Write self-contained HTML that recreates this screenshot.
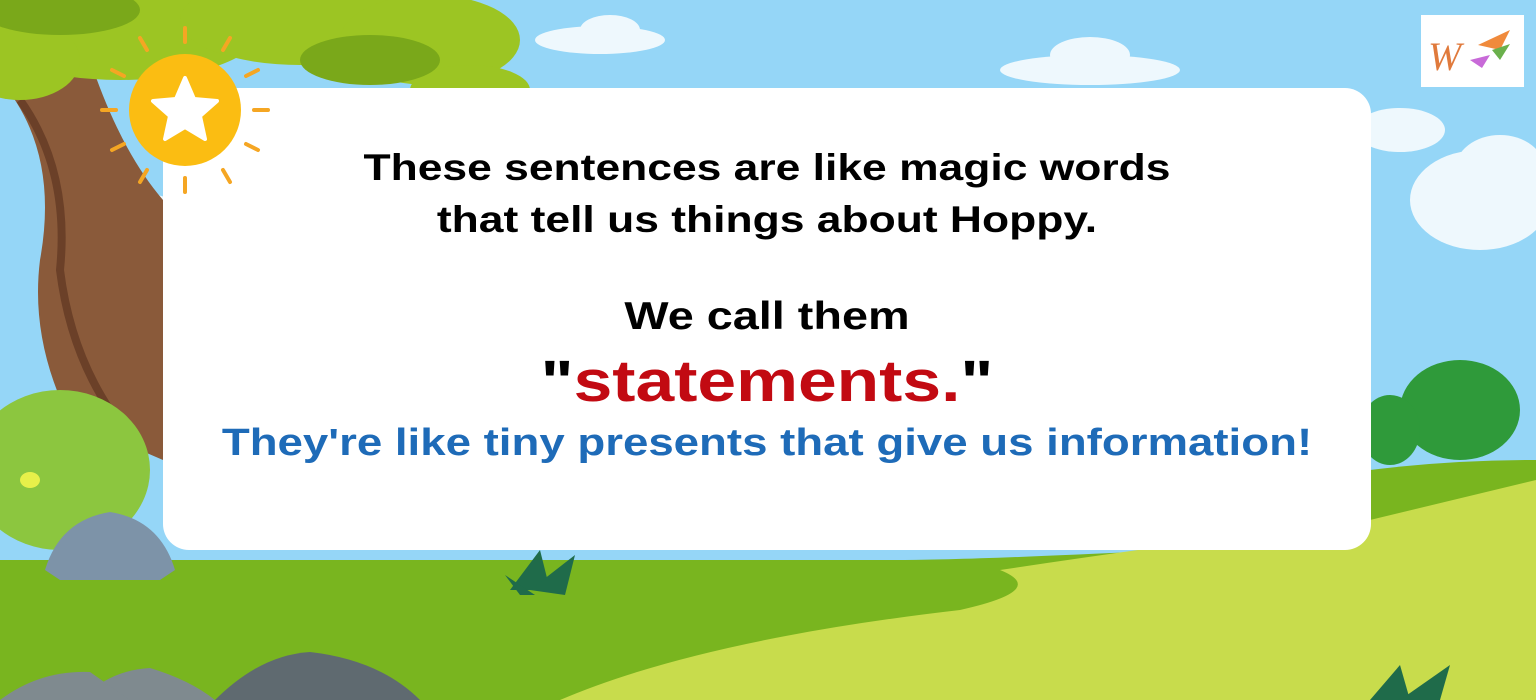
<!DOCTYPE html>
<html><head><meta charset="utf-8"><style>
html,body{margin:0;padding:0}
body{width:1536px;height:700px;overflow:hidden;position:relative;background:#95d6f7;font-family:"Liberation Sans",sans-serif}
.abs{position:absolute}
.card{position:absolute;left:163px;top:88px;width:1208px;height:462px;background:#fff;border-radius:26px}
.t{position:absolute;left:163px;width:1208px;text-align:center;font-weight:bold;color:#000;white-space:nowrap;transform:scaleX(1.2);transform-origin:50% 0}
</style></head><body>
<svg class="abs" style="left:0;top:0" width="1536" height="700">
<g fill="#eef8fd">
<ellipse cx="600" cy="40" rx="65" ry="14"/><ellipse cx="610" cy="30" rx="30" ry="15"/>
<ellipse cx="1090" cy="70" rx="90" ry="15"/><ellipse cx="1090" cy="55" rx="40" ry="18"/>
<ellipse cx="1400" cy="130" rx="45" ry="22"/>
<ellipse cx="1480" cy="200" rx="70" ry="50"/><ellipse cx="1500" cy="170" rx="45" ry="35"/>
<ellipse cx="130" cy="210" rx="50" ry="18"/>
</g>
<path d="M0 560 L0 700 L1536 700 L1536 460 Q1450 460 1370 470 L1370 540 Q1000 560 900 560 Q600 560 0 560Z" fill="#79b51f"/>
<path d="M560 700 Q700 640 960 610 Q1050 590 1000 570 Q1200 540 1370 520 L1536 480 L1536 700Z" fill="#c8dc4c"/>
<ellipse cx="1460" cy="410" rx="60" ry="50" fill="#2f9a3a"/>
<ellipse cx="1390" cy="430" rx="30" ry="35" fill="#2f9a3a"/>
<path d="M0 80 Q60 150 40 260 Q30 340 70 420 L163 460 L163 200 Q120 150 90 60 Z" fill="#8a5a3a"/>
<path d="M20 100 Q70 170 60 270 Q70 350 110 410" stroke="#6b4028" stroke-width="8" fill="none"/>
<g fill="#9cc523">
<ellipse cx="120" cy="30" rx="140" ry="50"/><ellipse cx="300" cy="20" rx="120" ry="45"/>
<ellipse cx="430" cy="40" rx="90" ry="45"/><ellipse cx="20" cy="60" rx="60" ry="40"/>
<ellipse cx="470" cy="90" rx="60" ry="25"/>
</g>
<g fill="#7aa81a"><ellipse cx="370" cy="60" rx="70" ry="25"/><ellipse cx="60" cy="10" rx="80" ry="25"/></g>
<ellipse cx="60" cy="470" rx="90" ry="80" fill="#8cc63f"/>
<ellipse cx="30" cy="480" rx="10" ry="8" fill="#e7f04a"/>
<path d="M45 570 Q60 520 110 512 Q160 520 175 570 L160 580 L60 580Z" fill="#7d93a8"/>
<path d="M80 700 Q110 670 150 668 Q190 680 215 700Z" fill="#7f8a8f"/>
<path d="M215 700 Q260 655 310 652 Q380 660 420 700Z" fill="#5f6a70"/>
<path d="M0 700 Q40 670 90 672 L130 700Z" fill="#7f8a8f"/>
<g fill="#1f6b4a"><path d="M510 590 L540 550 L550 590Z"/><path d="M530 590 L575 555 L565 595Z"/><path d="M505 575 L535 595 L520 595Z"/></g>
<g fill="#1f6b4a"><path d="M1370 700 L1400 665 L1410 700Z"/><path d="M1400 700 L1450 665 L1440 700Z"/></g>
<rect x="1421" y="15" width="103" height="72" fill="#fff"/>
<text x="1428" y="70" font-family="Liberation Serif" font-style="italic" font-size="40" fill="#e07a3c">W</text>
<path d="M1478 45 L1510 30 L1500 50Z" fill="#f08a3c"/><path d="M1470 60 L1490 55 L1482 68Z" fill="#c86ad8"/><path d="M1492 50 L1510 44 L1500 60Z" fill="#6ab04c"/>
</svg>
<div class="card"></div>
<svg class="abs" style="left:0;top:0" width="300" height="220">
<g stroke="#f5a623" stroke-width="4" stroke-linecap="round">
<line x1="185" y1="28" x2="185" y2="42"/><line x1="185" y1="178" x2="185" y2="192"/>
<line x1="102" y1="110" x2="116" y2="110"/><line x1="254" y1="110" x2="268" y2="110"/>
<line x1="140" y1="38" x2="147" y2="50"/><line x1="230" y1="38" x2="223" y2="50"/>
<line x1="140" y1="182" x2="147" y2="170"/><line x1="230" y1="182" x2="223" y2="170"/>
<line x1="112" y1="70" x2="124" y2="76"/><line x1="258" y1="70" x2="246" y2="76"/>
<line x1="112" y1="150" x2="124" y2="144"/><line x1="258" y1="150" x2="246" y2="144"/>
</g>
<circle cx="185" cy="110" r="56" fill="#fbbd12"/>
<path d="M185 78 L194 99 L217 101 L200 116 L205 139 L185 127 L165 139 L170 116 L153 101 L176 99Z" fill="#fff" stroke="#fff" stroke-width="4" stroke-linejoin="round"/>
</svg>
<div class="t" style="top:142px;font-size:37px;line-height:52px">These sentences are like magic words<br>that tell us things about Hoppy.</div>
<div class="t" style="top:294px;font-size:39px;line-height:46px">We call them</div>
<div class="t" style="top:348px;font-size:58px;line-height:68px">"<span style="color:#c20a12">statements.</span>"</div>
<div class="t" style="top:420px;font-size:38px;line-height:46px;color:#1e6bb8">They're like tiny presents that give us information!</div>
</body></html>
